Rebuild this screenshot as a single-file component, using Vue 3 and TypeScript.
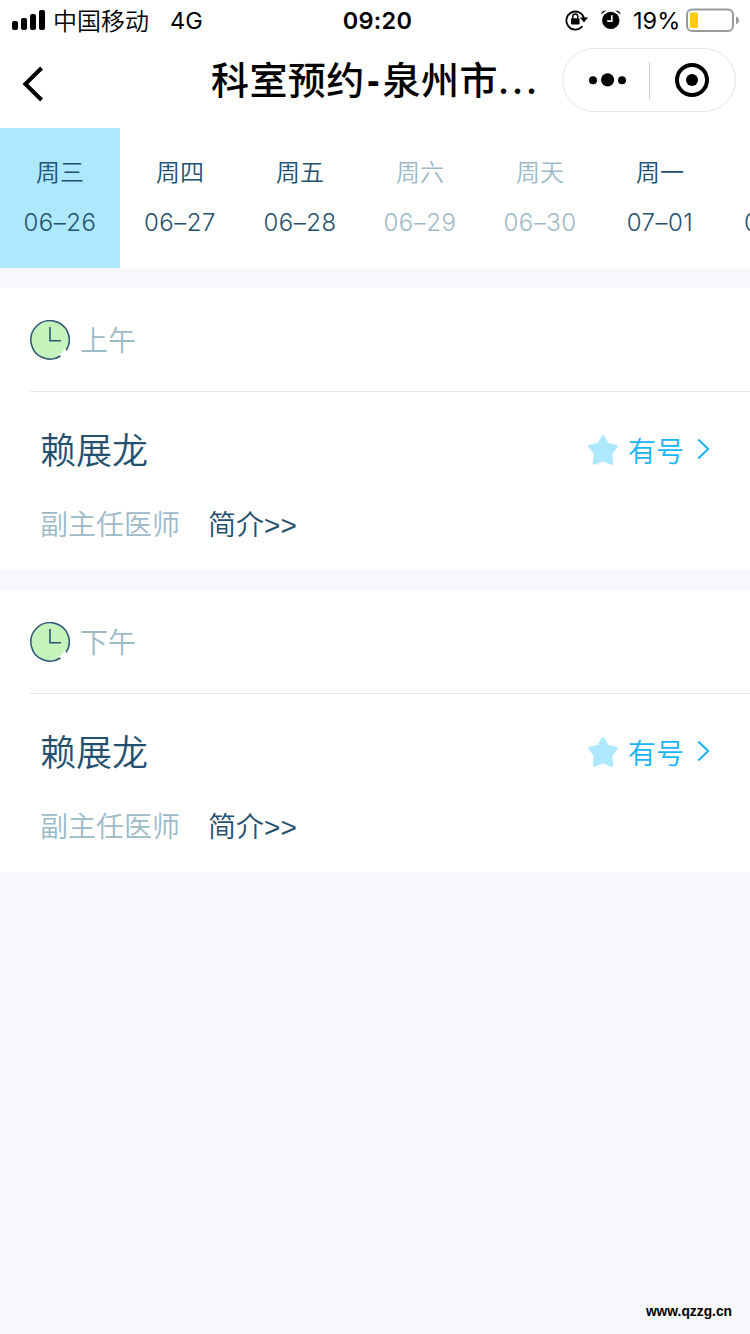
<script setup lang="ts">
interface Day {
  week: string
  date: string
  state: 'active' | 'open' | 'closed'
}

interface Session {
  period: string
  doctor: string
  title: string
}

const days: Day[] = [
  { week: '周三', date: '06–26', state: 'active' },
  { week: '周四', date: '06–27', state: 'open' },
  { week: '周五', date: '06–28', state: 'open' },
  { week: '周六', date: '06–29', state: 'closed' },
  { week: '周天', date: '06–30', state: 'closed' },
  { week: '周一', date: '07–01', state: 'open' },
  { week: '周二', date: '07–02', state: 'open' },
]

const sessions: Session[] = [
  { period: '上午', doctor: '赖展龙', title: '副主任医师' },
  { period: '下午', doctor: '赖展龙', title: '副主任医师' },
]
</script>

<template>
  <div class="page">
    <header class="top">
      <div class="status">
        <div class="status-left">
          <svg class="signal" width="33" height="20" viewBox="0 0 33 20">
            <rect x="0" y="11" width="6" height="9" rx="2" />
            <rect x="9" y="8" width="6" height="12" rx="2" />
            <rect x="18" y="4" width="6" height="16" rx="2" />
            <rect x="27" y="0" width="6" height="20" rx="2" />
          </svg>
          <span class="carrier">中国移动</span>
          <span class="network">4G</span>
        </div>
        <span class="time">09:20</span>
        <div class="status-right">
          <svg class="lock" width="24" height="22" viewBox="0 0 24 22">
            <path d="M17.4 17.2 A9 9 0 1 1 19 9" fill="none" stroke="#000" stroke-width="1.8" />
            <path d="M15 8.6 H23 L19 13.4 Z" />
            <rect x="6" y="9.2" width="8.6" height="6.2" rx="0.8" />
            <path d="M7.8 9.6 V7.4 A2.5 2.5 0 0 1 12.8 7.4 V9.6" fill="none" stroke="#000" stroke-width="1.5" />
          </svg>
          <svg class="alarm" width="20" height="20" viewBox="0 0 20 20">
            <circle cx="9.8" cy="10.4" r="8.7" />
            <path d="M0 4.4 Q0.6 0.8 5.4 0.6 Z" />
            <path d="M19.6 4.4 Q19 0.8 14.2 0.6 Z" />
            <path d="M10.8 5.2 V11.2 H6.2" fill="none" stroke="#fff" stroke-width="1.7" />
          </svg>
          <span class="percent">19%</span>
          <svg class="battery" width="54" height="24" viewBox="0 0 54 24">
            <rect x="1" y="1.6" width="46" height="21.4" rx="5" fill="#fff" stroke="#999" stroke-width="2" />
            <rect x="4" y="4.6" width="8" height="15.4" rx="1.2" fill="#ffcc00" />
            <path d="M50 8.6 Q53 9.6 53 12.3 Q53 15.2 50 16.2 Z" fill="#999" />
          </svg>
        </div>
      </div>
      <div class="nav">
        <svg class="back" width="24" height="38" viewBox="0 0 24 38">
          <path d="M20.6 3 L4.4 19 L20.6 35" fill="none" stroke="#000" stroke-width="4" />
        </svg>
        <h1 class="title">科室预约<span class="hyphen">-</span>泉州市<span class="dots">...</span></h1>
        <div class="capsule">
          <svg class="more" width="38" height="14" viewBox="0 0 38 14">
            <circle cx="4" cy="7.3" r="4" />
            <circle cx="18.6" cy="6.8" r="6.6" />
            <circle cx="33" cy="7.3" r="4" />
          </svg>
          <i class="divider"></i>
          <svg class="target" width="34" height="34" viewBox="0 0 34 34">
            <circle cx="17" cy="17" r="15" fill="none" stroke="#000" stroke-width="4" />
            <circle cx="17" cy="17" r="6" />
          </svg>
        </div>
      </div>
    </header>

    <nav class="days">
      <div v-for="day in days" :key="day.date" class="day" :class="day.state">
        <span class="week">{{ day.week }}</span>
        <span class="date">{{ day.date }}</span>
      </div>
    </nav>

    <section v-for="session in sessions" :key="session.period" class="session">
      <div class="period">
        <svg class="clock" width="40" height="40" viewBox="0 0 40 40">
          <path d="M30.5 36 L28.5 34 Q33 33.5 34 28.5 L36.2 30.3 A19.2 19.2 0 1 0 30.5 36 Z" fill="#c5f3bc" />
          <path d="M30.5 36 A19.2 19.2 0 1 1 36.2 30.3" fill="none" stroke="#2b5577" stroke-width="1.5" />
          <path d="M20 7 V20.7 H31" fill="none" stroke="#2b5577" stroke-width="1.6" />
        </svg>
        <span class="label">{{ session.period }}</span>
      </div>
      <div class="doctor">
        <div class="row">
          <span class="name">{{ session.doctor }}</span>
          <div class="available">
            <svg class="star" width="30" height="30" viewBox="0 0 30 30">
              <path
                d="M15 2 L19.1 9.6 L28 11.4 L22.4 18.2 L23.4 28 L15 24.4 L6.6 28 L7.6 18.2 L2 11.4 L10.9 9.6 Z"
                fill="#ade8ff" stroke="#ade8ff" stroke-width="3.6" stroke-linejoin="round"
              />
            </svg>
            <span>有号</span>
            <svg class="arrow" width="13" height="22" viewBox="0 0 13 22">
              <path d="M1.2 0.5 L11.2 10 L1.2 19.5" fill="none" stroke="#16b5fa" stroke-width="2" />
            </svg>
          </div>
        </div>
        <div class="meta">
          <span class="rank">{{ session.title }}</span>
          <span class="intro">简介<span class="gt">&gt;&gt;</span></span>
        </div>
      </div>
    </section>

    <footer class="site">www.qzzg.cn</footer>
  </div>
</template>

<style>
body {
  margin: 0;
  background: #f7f8fc;
}
</style>

<style scoped>
.page {
  display: flex;
  flex-direction: column;
  width: 750px;
  height: 1334px;
  overflow: hidden;
  background: #f7f8fc;
  font-family: "Inter", "Noto Sans CJK SC", sans-serif;
  font-weight: 350;
  color: #24506f;
}
svg {
  display: block;
  flex: none;
}
span,
h1 {
  white-space: nowrap;
}
.top {
  flex: none;
  height: 128px;
  background: #fff;
  color: #000;
}
.status {
  display: grid;
  grid-template-columns: 330px 95px 1fr;
  grid-template-rows: 40px;
  align-items: center;
  height: 40px;
  line-height: 36px;
  font-size: 24px;
}
.status-left,
.status-right {
  display: flex;
  align-items: center;
}
.signal {
  margin: 0 8px 0 12px;
}
.carrier {
  padding-top: 3px;
}
.network {
  margin-left: 21px;
  padding-top: 2px;
  font-weight: 400;
  font-size: 23.5px;
}
.time {
  padding-top: 2px;
  text-align: center;
  font-weight: 600;
  font-size: 23.5px;
  letter-spacing: 0.3px;
}
.status-right {
  padding-left: 140px;
}
.alarm {
  margin-left: 12px;
}
.percent {
  width: 47px;
  margin-left: 12px;
  padding-top: 2px;
  font-weight: 400;
  font-size: 23.5px;
}
.battery {
  margin-left: 6px;
}
.nav {
  display: grid;
  grid-template-columns: 211px 351px 174px;
  align-items: center;
  height: 80px;
}
.back {
  margin: 7px 0 0 21px;
}
.title {
  margin: 0;
  font-size: 38px;
  line-height: 80px;
  letter-spacing: 0.4px;
  font-weight: 500;
}
.hyphen {
  display: inline-block;
  width: 18px;
  text-align: center;
  font-family: "Liberation Sans", sans-serif;
  font-weight: 700;
  line-height: 1;
}
.dots {
  letter-spacing: 2.4px;
}
.capsule {
  box-sizing: border-box;
  display: flex;
  align-items: center;
  width: 174px;
  height: 64px;
  border: 1px solid #e5e5e5;
  border-radius: 32px;
}
.more {
  margin-left: 26px;
}
.divider {
  width: 1px;
  height: 37px;
  margin: 0 25px 0 22px;
  background: #ccc;
}
.days {
  display: flex;
  flex: none;
  height: 140px;
  overflow: hidden;
  background: #fff;
}
.day {
  box-sizing: border-box;
  display: flex;
  flex: none;
  flex-direction: column;
  align-items: center;
  width: 120px;
  padding-top: 20px;
  font-size: 24px;
  line-height: 50px;
}
.date {
  font-weight: 300;
  letter-spacing: 0.5px;
}
.active {
  background: #ade8ff;
}
.closed {
  color: #9dbac8;
}
.session {
  flex: none;
  height: 282px;
  margin-top: 20px;
  background: #fff;
}
.period {
  display: flex;
  align-items: center;
  gap: 10px;
  height: 103px;
  margin-left: 30px;
  border-bottom: 1px solid #e5e5e5;
  color: #9dbac8;
  font-size: 28px;
}
.clock {
  margin-top: 1px;
}
.label {
  padding-bottom: 2px;
}
.doctor {
  padding: 28px 40px 0;
}
.row {
  display: flex;
  align-items: center;
  justify-content: space-between;
  height: 60px;
}
.name {
  padding-bottom: 4px;
  font-size: 36px;
}
.available {
  display: flex;
  align-items: center;
  color: #16b5fa;
  font-size: 28px;
}
.star {
  margin-right: 10px;
}
.arrow {
  margin-left: 13px;
}
.meta {
  display: flex;
  gap: 28px;
  margin-top: 24px;
  font-size: 28px;
  line-height: 42px;
}
.rank {
  color: #9dbac8;
}
.gt {
  font-family: "Liberation Sans", sans-serif;
}
.site {
  margin: auto 18px 12px auto;
  color: #000;
  font: bold 13.8px/20px "Liberation Sans", sans-serif;
}
</style>
